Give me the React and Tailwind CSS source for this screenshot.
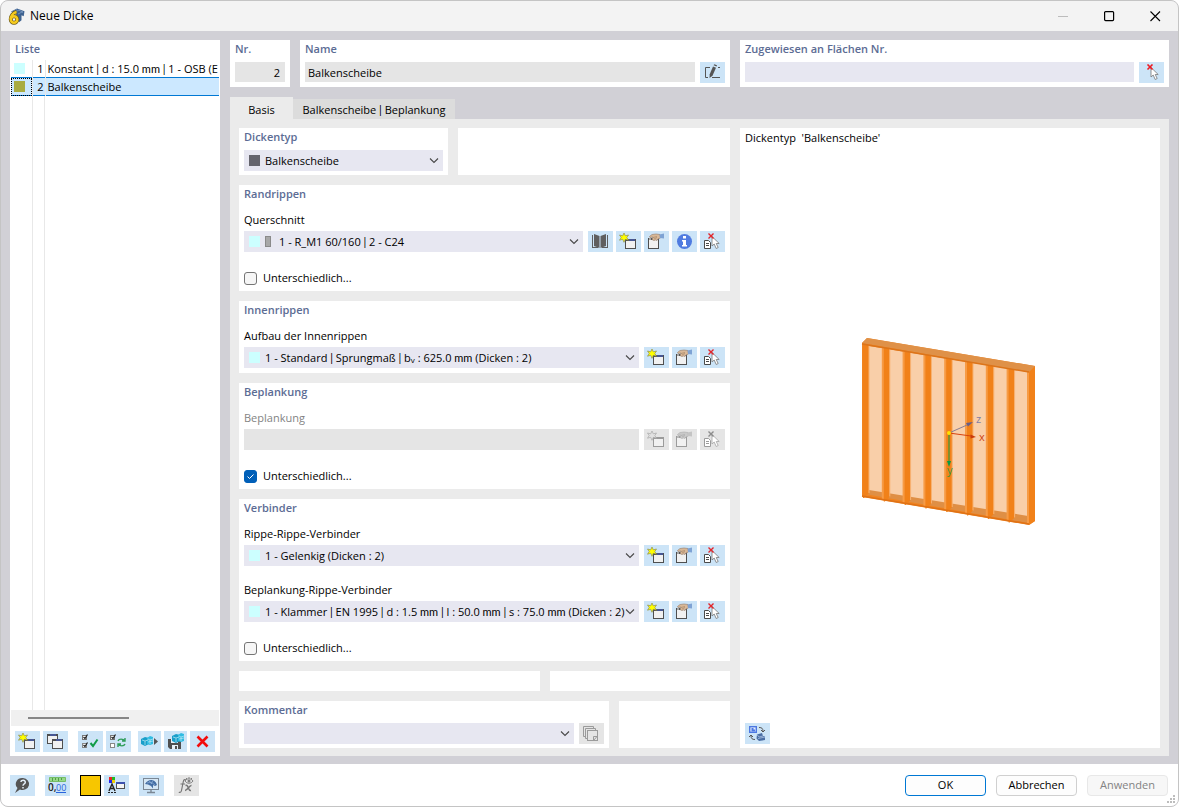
import React from 'react';

// shared look of the blue tool buttons
const toolButton = 'flex h-[21px] w-[25px] shrink-0 items-center justify-center bg-[#cce4f7] hover:bg-[#b8d9f3] disabled:bg-[#e5e5e5]';

const Svg = ({ children, w = 19, h = 17 }) => (
  <svg width={w} height={h} viewBox={`0 0 ${w} ${h}`} fill="none" aria-hidden="true">
    {children}
  </svg>
);

const BookIcon = () => (
  <Svg>
    <path d="M1.500 2v12M16.500 2v12M1 14.500h6M11 14.500h6" stroke="#5f5f5f" />
    <path d="M3 1l5.500 2v12L3 13zM15 1L9.500 3v12l5.500-2z" fill="#5f5f5f" />
  </Svg>
);

const StarWindow = ({ off }) => (
  <Svg>
    <rect x="6.500" y="6.500" width="10" height="9" fill="#f1f1f1" stroke={off ? '#9b9b9b' : '#4f4f4f'} />
    <path d="M6 7h11" stroke={off ? '#9b9b9b' : '#4f4f4f'} strokeWidth="2" />
    {!off && <path d="M10 7h6" stroke="#4060d8" />}
    <path
      d="M5 0l1.300 2.800L9.500 2 7.800 4.500 9.500 7.200 6.300 6.300 5 9.300 3.700 6.300.5 7.200 2.200 4.500.5 2l3.200.8z"
      fill={off ? '#e2e2e2' : '#ffff00'}
      stroke={off ? '#a8a8a8' : '#8f8f50'}
      strokeWidth=".7"
    />
  </Svg>
);

const HandWindow = ({ off }) => (
  <Svg>
    <rect x="1.500" y="6.500" width="10" height="9" fill="#f1f1f1" stroke={off ? '#9b9b9b' : '#4f4f4f'} />
    <path d="M1 6h11" stroke={off ? '#9b9b9b' : '#4f4f4f'} strokeWidth="2" />
    <path d="M2 6h2" stroke={off ? '#d8d8d8' : '#ffffff'} />
    {!off && <path d="M9 6.500h2" stroke="#4060d8" />}
    <path
      d="M2.500 3.500L5 1.500 9 1l4 .5.500 3.500-2.500 1-1 1.500-1.500-.5-1.500.5-1.500-.5L5 6l1-2-3 .5z"
      fill={off ? '#c9c9c9' : '#d9b897'}
      stroke={off ? '#ababab' : '#927b68'}
      strokeWidth=".6"
    />
    <path d="M6 4.500l4-1M7 6l3-1.500" stroke={off ? '#a5a5a5' : '#9d7d60'} strokeWidth=".6" />
    <path d="M12.500 1.500L17 .5v5l-4-.5z" fill={off ? '#c4c4c4' : '#7fa3d4'} />
  </Svg>
);

const InfoIcon = () => (
  <Svg w={17}>
    <circle cx="8.500" cy="8.500" r="7.500" fill="#4f7be0" />
    <path d="M7 3h3v2.500H7zM6 7h4v5h1v1.500H6V12h1V8.500H6z" fill="#fff" />
  </Svg>
);

const CursorShape = ({ off }) => (
  <path d="M9 3.500v9.500l2.200-2 2 4.500 2-1-2-4h3z" fill="#fff" stroke={off ? '#a5a5a5' : '#777'} strokeWidth=".8" />
);

const PickFromList = ({ off }) => (
  <Svg>
    <path d="M1.500 7.500h4l2 2v6h-6z" fill="#fff" stroke={off ? '#9b9b9b' : '#4a4a4a'} />
    <path d="M3 10.500h3M3 12.500h3" stroke={off ? '#9b9b9b' : '#4a4a4a'} />
    <CursorShape off={off} />
    <path d="M5.500.5l5 5M10.500.5l-5 5" stroke={off ? '#8c8c8c' : '#e2252b'} strokeWidth="1.400" />
  </Svg>
);

const PickIcon = () => (
  <Svg>
    <CursorShape />
    <path d="M5.500.5l5 5M10.500.5l-5 5" stroke="#ed1c24" strokeWidth="1.600" />
  </Svg>
);

const EditIcon = () => (
  <Svg>
    <path d="M7 3.500H2.500v10H5M9 13.500h8M15 3.500h2" stroke="#555" />
    <path d="M10 2.500l3 1.200-3.500 8L6.500 14l.2-3.800z" fill="#555" />
    <path d="M10.600 1.300l3 1.200.4-1.200-2.700-1z" fill="#555" />
  </Svg>
);

const WindowsIcon = () => (
  <Svg>
    <rect x="1.500" y="1.500" width="10" height="9" fill="#f1f1f1" stroke="#4f4f4f" />
    <path d="M1 2h11" stroke="#4f4f4f" strokeWidth="2" />
    <path d="M4 2h6" stroke="#4060d8" />
    <rect x="6.500" y="6.500" width="10" height="9" fill="#f1f1f1" stroke="#4f4f4f" />
    <path d="M6 7h11" stroke="#4f4f4f" strokeWidth="2" />
    <path d="M10 7h6" stroke="#4060d8" />
  </Svg>
);

const TwoChecks = ({ sync }) => (
  <Svg>
    <rect x="1.500" y="2.500" width="4" height="4" fill="#fff" stroke="#777" />
    <path d="M2.500 4L4 5.500l2.500-4" stroke="#222" strokeWidth="1.200" />
    <rect x="1.500" y="10.500" width="4" height="4" fill="#fff" stroke="#888" />
    {!sync && <path d="M2.500 12L4 13.500l2.500-4" stroke="#222" strokeWidth="1.200" />}
    {sync ? (
      <path d="M9 8c1-2.500 5-2.500 7 0M16 5v3h-3M16 11c-1 2.500-5 2.500-7 0M9 14v-3h3" stroke="#2e9c58" strokeWidth="1.400" />
    ) : (
      <path d="M9.500 10l2.500 3L16.500 6.500" stroke="#119c48" strokeWidth="2" />
    )}
  </Svg>
);

const Cubes = () => (
  <>
    <path d="M1 6l4-2 4 1v6l-4 2-4-2z" fill="#1a9fca" />
    <path d="M7 5l3-2 3 1v7l-3 1-3-1z" fill="#31bce2" />
    <path d="M2 7l3 1v4M8 6l2 1v4M5 8l3-1M10 7l3-1M8 9l5-1" stroke="#bfeaf5" strokeWidth=".7" />
  </>
);

const ExportIcon = () => (
  <Svg>
    <Cubes />
    <path d="M14 5l4 3.500-4 3.500z" fill="#555" />
  </Svg>
);

const SaveCubes = () => (
  <Svg>
    <path d="M2 6h13v10H4l-2-2z" fill="#4f4f4f" />
    <path d="M5 6h7v4H5zM6 12h6v4H6z" fill="#e8f1f8" />
    <path d="M9 13h2v3H9z" fill="#4f4f4f" />
    <g transform="translate(5 -3)">
      <Cubes />
    </g>
  </Svg>
);

const DeleteIcon = () => (
  <Svg>
    <path d="M4.500 3.500l10 10M14.500 3.500l-10 10" stroke="#f20d0d" strokeWidth="2.600" />
  </Svg>
);

const HelpIcon = () => (
  <Svg>
    <path d="M10 1a6.500 6 0 1 1-3 11.500L2 16l2.500-5A6.500 6 0 0 1 10 1z" fill="#555" />
    <path d="M8 5c0-2.300 4.500-2.300 4.300.2 0 1.800-2.300 1.500-2.300 3.500M10 10v1.600" stroke="#e5f0fa" strokeWidth="1.500" />
  </Svg>
);

const UnitsIcon = () => (
  <Svg>
    <path d="M1.500.5h16v4h-16z" fill="#98d988" stroke="#75bd67" />
    <path d="M4.500 1v3M7.500 1v2M10.500 1v3M13.500 1v2" stroke="#4f9d49" />
    <text x="0" y="14" fontFamily="Open Sans, sans-serif" fontSize="10" fontWeight="600" fill="#222">0,</text>
    <text x="8" y="14" fontFamily="Open Sans, sans-serif" fontSize="9" fill="#2864dc">00</text>
    <path d="M8 15.500h10" stroke="#2864dc" />
  </Svg>
);

const DisplayIcon = () => (
  <Svg>
    <path d="M2 0h3v3H2z" fill="#e22" />
    <path d="M5 0h3v3H5z" fill="#2b2" />
    <path d="M2 3h3v3H2z" fill="#22e" />
    <path d="M5 3h3v3H5z" fill="#ec0" />
    <path d="M2 14l3-7 3 7M3 11.500h4" stroke="#222" strokeWidth="1.400" />
    <path d="M1 15.500h9" stroke="#222" strokeDasharray="2 1" />
    <rect x="9.500" y="5.500" width="8" height="6" fill="#f4f4f4" stroke="#4f4f4f" />
    <path d="M9 6h9" stroke="#3d52ae" strokeWidth="2" />
  </Svg>
);

const MonitorIcon = () => (
  <Svg>
    <rect x="1.500" y="1.500" width="15" height="11" fill="#d6e7f5" stroke="#7b8794" />
    <path d="M3 7c2-3 4-4 6-4s5 1 6 5l-2 1-2-1v3.500L9 9 6 7.500z" fill="#456ea4" />
    <path d="M5 6l4-1 4 3M7 4l3 3M11 3.500L9 7" stroke="#9abbe0" strokeWidth=".6" />
    <path d="M9 13v3M5 15.500h8" stroke="#7b8794" strokeWidth="1.400" />
  </Svg>
);

const FunctionIcon = () => (
  <Svg>
    <path d="M9 3C7.500 1.800 6.600 3 6.200 5L4.600 13c-.4 2-1.300 3-2.800 2.200M3.500 7h4.500" stroke="#777" strokeWidth="1.200" />
    <path d="M8.500 8.500c3-1.500 2.500 6 5.500 5M14.500 8.500c-2-.5-4 5-6.500 5" stroke="#777" strokeWidth="1.400" />
    <path d="M8 4c2-3 6-3 8 0-2 3-6 3-8 0zM9 1l1 1M12 0v1M15 1l-1 1" stroke="#808080" />
    <circle cx="12" cy="4" r="1.500" fill="#808080" />
  </Svg>
);

const CopyIcon = () => (
  <Svg>
    <path d="M3 11.500H1.500v-10h10V3M5 13.500H3.500v-10h10V5" stroke="#9b9b9b" />
    <rect x="5.500" y="5.500" width="10" height="10" stroke="#9b9b9b" />
    <path d="M11.500 15v-3.500H15l-3.500 4" stroke="#9b9b9b" />
  </Svg>
);

const SwapViewIcon = () => (
  <Svg>
    <rect x="1.700" y="1.700" width="6.600" height="5.600" fill="#e2edff" stroke="#4c78e2" strokeWidth="1.400" />
    <path d="M3.500 3h2v1.500H7V6.500H3.500z" fill="#4c78e2" />
    <path d="M11 2.500c3 0 4 1 4 4M13 5l2 2 2-2" stroke="#555" />
    <path d="M7 14.500c-3 0-4-1-4-4M1 12l2-2 2 2" stroke="#555" />
    <path d="M9 9.500l5-1.500 1 3 2 .5v3.500l-6 1-2.500-2.500z" fill="#4b6ea4" />
    <path d="M9 9.500l2 2.500 4-1M10 13.500l7-1.500" stroke="#a9c1e3" strokeWidth=".8" />
  </Svg>
);

const AppLogo = () => (
  <Svg w={17} h={17}>
    <path d="M3 3.500L9 .5l7.500 2.700-.8 5-2.200-1v5l-2.500 2-3-8z" fill="#3e6290" />
    <path d="M4 4l5-2.500M7 4l5-2.500M10 6l5-2.500M11 2l4 2.500" stroke="#87a5cb" strokeWidth=".7" />
    <path d="M8.500 4C5 4.800 2.800 8 2.800 11.300" stroke="#6b5a1c" strokeWidth="4" />
    <ellipse cx="6" cy="11.500" rx="3.200" ry="3.200" stroke="#6b5a1c" strokeWidth="4" />
    <path d="M8.500 4C5 4.800 2.800 8 2.800 11.300" stroke="#f6cb1f" strokeWidth="2.600" />
    <ellipse cx="6" cy="11.500" rx="3.200" ry="3.200" stroke="#f6cb1f" strokeWidth="2.600" />
  </Svg>
);

// separators and units of a property string are set tighter than its words
const Piped = ({ text }) =>
  text.split(/( \| | mm)/).map((part, i) =>
    i % 2 ? <span key={i} className="font-['Lato',sans-serif]">{part}</span> : part
  );

const Box = ({ title, className = 'pb-[5px]', children }) => (
  <section className={`bg-white px-[5px] ${className}`}>
    {title && <h2 className="h-[18px] font-semibold leading-[18px] text-[#5c6c94]">{title}</h2>}
    {children}
  </section>
);

const Combo = ({ label, value, display, swatches }) => (
  <div className="relative h-[21px] min-w-0 flex-1 bg-[#e7e7f1] focus-within:ring-1 focus-within:ring-[#0067c0]">
    <select aria-label={label} className="block h-full w-full appearance-none opacity-0">
      <option>{value}</option>
    </select>
    <div aria-hidden="true" className="pointer-events-none absolute inset-0 flex items-center gap-[5px] pl-[5px]">
      {swatches}
      <span className="whitespace-pre pt-px leading-[18px]">{display || <Piped text={value} />}</span>
    </div>
    <svg className="pointer-events-none absolute right-[4px] top-[8px]" width="10" height="6" viewBox="0 0 10 6" fill="none">
      <path d="M1 .5l4 4 4-4" stroke="#484848" strokeWidth="1.100" />
    </svg>
  </div>
);

const Cyan = () => <span className="size-[11px] bg-[#ccffff]" />;

// new / edit / pick buttons that follow most of the fields
const EntryButtons = ({ off }) => (
  <>
    <button type="button" title="Neu" disabled={off} className={toolButton}><StarWindow off={off} /></button>
    <button type="button" title="Bearbeiten" disabled={off} className={toolButton}><HandWindow off={off} /></button>
    <button type="button" title="Auswählen" disabled={off} className={toolButton}><PickFromList off={off} /></button>
  </>
);

const FieldRow = ({ label, value, display, className = 'mt-2' }) => (
  <div className={className}>
    <div className="h-5 leading-[18px]">{label}</div>
    <div className="flex gap-[5px]">
      <Combo label={label} value={value} display={display} swatches={<Cyan />} />
      <div className="flex gap-[3px]">
        <EntryButtons />
      </div>
    </div>
  </div>
);

const Different = ({ checked }) => (
  <label className="mt-[18px] flex h-[16px] items-center gap-[6px]">
    <span className="relative size-[13px]">
      <input
        type="checkbox"
        defaultChecked={checked}
        className="peer block size-[13px] appearance-none rounded-[3px] border border-[#757575] bg-[#f6f6f6] checked:border-[#005fb8] checked:bg-[#005fb8]"
      />
      <svg className="pointer-events-none absolute inset-0 hidden peer-checked:block" width="13" height="13" viewBox="0 0 13 13" fill="none">
        <path d="M3.500 6.500l2 2 4-4" stroke="#fff" />
      </svg>
    </span>
    Unterschiedlich...
  </label>
);

const ribs = [0, 1, 2, 3, 4, 5, 6, 7];

const WallDrawing = () => (
  <svg width="200" height="200" viewBox="850 330 200 200" role="img" aria-label="Balkenscheibe">
    <path d="M862 343l5-5 168 28v155l-6 4-167-28z" fill="#f18420" />
    <path d="M869 346l159 26v146l-159-25z" fill="#f9cfa9" />
    <path d="M865 494l4-4 159 26v7z" fill="#df8f45" />
    {ribs.map((i) => {
      const x = 862 + i * 20.8;
      const y = 344 + i * 3.5;
      return (
        <g key={i}>
          {i > 0 && <path d={`M${x - 1} ${y}v152l3 0V${y}z`} fill="#f79b45" />}
          <path d={`M${x + 1} ${y}l6 1v148l-5 5-1 0z`} fill="#f18119" />
          <path d={`M${x + 7} ${y + 1}v148`} stroke="#f8b273" />
        </g>
      );
    })}
    <path d="M1027 371l2 1v152l-2 0z" fill="#f79b45" />
    <path d="M1029 372l6-6v155l-6 4z" fill="#f18119" />
    <path d="M862 343l5-5 168 28-6 6z" fill="#df9148" />
    <path d="M862 344l167 28" stroke="#dc741a" strokeWidth="1.500" />
    <path d="M862 496l167 28" stroke="#df7216" strokeWidth="1.500" />
    <path d="M949 433l18-8" stroke="#8b7d91" />
    <path d="M973 422l-7 1 2 3.500z" fill="#675e88" />
    <path d="M949 433l22 3" stroke="#d8420d" />
    <path d="M976 437l-5.500-2.500v4z" fill="#c93a0b" />
    <path d="M949 433v30" stroke="#5c9332" strokeWidth="1.500" />
    <path d="M949 467l-2-6h4z" fill="#079c46" />
    <circle cx="949" cy="433" r="2" fill="#ffe000" />
    <g fontFamily="Open Sans, sans-serif" fontSize="11">
      <text x="976" y="423" fill="#817ca3">z</text>
      <text x="979" y="441" fill="#cf4313">x</text>
      <text x="947" y="474" fill="#3c963b">y</text>
    </g>
  </svg>
);

const TitleBar = () => (
  <header className="flex h-[30px] shrink-0 items-center bg-[#f3f3f3] pl-[7px]">
    <AppLogo />
    <h1 className="ml-[5px] flex-1 text-[12px]">Neue Dicke</h1>
    <button type="button" aria-label="Minimieren" className="flex h-full w-[46px] items-center justify-center">
      <svg width="11" height="11"><path d="M0 5.500h10" stroke="#bcbcbc" /></svg>
    </button>
    <button type="button" aria-label="Maximieren" className="flex h-full w-[46px] items-center justify-center">
      <svg width="11" height="11" fill="none"><rect x=".6" y=".6" width="9" height="9" rx="1" stroke="#000" strokeWidth="1.200" /></svg>
    </button>
    <button type="button" aria-label="Schließen" className="flex h-full w-[46px] items-center justify-center">
      <svg width="11" height="11"><path d="M.5.5l9.500 9.500M10 .5L.5 10" stroke="#000" strokeWidth="1.100" /></svg>
    </button>
  </header>
);

const ListPanel = () => (
  <aside className="flex w-[210px] shrink-0 flex-col bg-white">
    <h2 className="h-[20px] px-[5px] font-semibold leading-[18px] text-[#5c6c94]">Liste</h2>
    <div className="flex flex-1 flex-col overflow-hidden px-px">
      <table className="w-full table-fixed border-collapse leading-[17px]">
        <tbody>
          <tr className="h-[17px]">
            <td className="w-[21px] pl-[3px]"><div className="size-[11px] bg-[#ccffff]" /></td>
            <td className="w-[13px] border-x border-[#e8e8e8] pr-px text-right">1</td>
            <td className="whitespace-pre pl-[2px]"><Piped text="Konstant | d : 15.0 mm | 1 - OSB (E" /></td>
          </tr>
          <tr className="h-[18px] border-y border-[#0078d4] bg-[#cce8ff]">
            <td className="pl-[3px] outline-1 -outline-offset-1 outline-dotted outline-black"><div className="size-[11px] bg-[#a9ac41]" /></td>
            <td className="border-x border-[#e8e8e8] pr-px text-right">2</td>
            <td className="whitespace-pre pl-[2px]">Balkenscheibe</td>
          </tr>
        </tbody>
      </table>
      <div className="ml-[21px] w-[13px] flex-1 border-x border-[#e8e8e8]" />
      <div className="flex h-[16px] items-center bg-[#f0f0f0]">
        <div className="ml-[17px] h-[2px] w-[101px] bg-[#868686]" />
      </div>
    </div>
    <div className="flex px-[5px] pb-[4px] pt-[5px]">
      <button type="button" title="Neu" className={toolButton}><StarWindow /></button>
      <button type="button" title="Kopieren" className={`${toolButton} ml-[3px]`}><WindowsIcon /></button>
      <button type="button" title="Alle wählen" className={`${toolButton} ml-[10px]`}><TwoChecks /></button>
      <button type="button" title="Auswahl umkehren" className={`${toolButton} ml-[3px]`}><TwoChecks sync /></button>
      <div className="ml-auto flex gap-[3px]">
        <button type="button" title="Importieren" className="flex h-[21px] w-[23px] items-center justify-center bg-[#cce4f7]"><ExportIcon /></button>
        <button type="button" title="Speichern" className="flex h-[21px] w-[23px] items-center justify-center bg-[#cce4f7]"><SaveCubes /></button>
        <button type="button" title="Löschen" className={toolButton}><DeleteIcon /></button>
      </div>
    </div>
  </aside>
);

const HeaderFields = () => (
  <div className="flex gap-[10px]">
    <Box title="Nr." className="h-[47px] w-[60px]">
      <input aria-label="Nr." readOnly value="2" className="mt-1 block h-[20px] w-full bg-[#e5e5e5] pr-[5px] text-right" />
    </Box>
    <Box title="Name" className="h-[47px] w-0 flex-[430]">
      <div className="mt-1 flex gap-[5px]">
        <input aria-label="Name" readOnly value="Balkenscheibe" className="h-[20px] min-w-0 flex-1 bg-[#e5e5e5] pl-[3px]" />
        <button type="button" title="Name bearbeiten" className={toolButton}><EditIcon /></button>
      </div>
    </Box>
    <Box title="Zugewiesen an Flächen Nr." className="h-[47px] w-0 flex-[429]">
      <div className="mt-1 flex gap-[5px]">
        <input aria-label="Zugewiesen an Flächen Nr." className="h-[20px] min-w-0 flex-1 bg-[#e7e7f1] pl-[3px]" />
        <button type="button" title="Flächen auswählen" className={toolButton}><PickIcon /></button>
      </div>
    </Box>
  </div>
);

const Form = () => (
  <div className="flex min-w-0 flex-col gap-[10px]">
    <div className="flex gap-[10px]">
      <Box title="Dickentyp" className="w-[209px] pb-1">
        <div className="mt-1 flex">
          <Combo label="Dickentyp" value="Balkenscheibe" swatches={<span className="size-[11px] bg-[#65656d]" />} />
        </div>
      </Box>
      <div className="flex-1 bg-white" />
    </div>

    <Box title="Randrippen">
      <div className="mt-2 h-5 leading-[18px]">Querschnitt</div>
      <div className="flex gap-[5px]">
        <Combo
          label="Querschnitt"
          value="1 - R_M1 60/160 | 2 - C24"
          swatches={<><Cyan /><span className="mr-[3px] h-[11px] w-[6px] border border-[#8a8a8a] bg-[#a8a8a8]" /></>}
        />
        <div className="flex gap-[3px]">
          <button type="button" title="Bibliothek" className={toolButton}><BookIcon /></button>
          <button type="button" title="Neu" className={toolButton}><StarWindow /></button>
          <button type="button" title="Bearbeiten" className={toolButton}><HandWindow /></button>
          <button type="button" title="Info" className={toolButton}><InfoIcon /></button>
          <button type="button" title="Auswählen" className={toolButton}><PickFromList /></button>
        </div>
      </div>
      <Different />
    </Box>

    <Box title="Innenrippen">
      <FieldRow
        label="Aufbau der Innenrippen"
        value="1 - Standard | Sprungmaß | bᵥ : 625.0 mm (Dicken : 2)"
        display={
          <>
            <Piped text="1 - Standard | Sprungmaß | b" />
            <sub className="-bottom-px text-[8px]">v</sub>
            <Piped text=" : 625.0 mm (Dicken : 2)" />
          </>
        }
      />
    </Box>

    <Box title="Beplankung">
      <label htmlFor="beplankung" className="mt-2 block h-5 leading-[18px] text-[#838383]">Beplankung</label>
      <div className="flex gap-[5px]">
        <input id="beplankung" disabled className="h-[21px] min-w-0 flex-1 bg-[#e5e5e5]" />
        <div className="flex gap-[3px]">
          <EntryButtons off />
        </div>
      </div>
      <Different checked />
    </Box>

    <Box title="Verbinder">
      <FieldRow label="Rippe-Rippe-Verbinder" value="1 - Gelenkig (Dicken : 2)" />
      <FieldRow
        label="Beplankung-Rippe-Verbinder"
        value="1 - Klammer | EN 1995 | d : 1.5 mm | l : 50.0 mm | s : 75.0 mm (Dicken : 2)"
        className="mt-[15px]"
      />
      <Different />
    </Box>

    <div className="flex h-[20px] gap-[10px]">
      <div className="flex-1 bg-white" />
      <div className="w-[180px] bg-white" />
    </div>

    <div className="flex gap-[10px]">
      <Box title="Kommentar" className="flex-1 pb-1">
        <div className="mt-1 flex gap-[5px]">
          <Combo label="Kommentar" value="" />
          <button type="button" title="Kommentare" disabled className={toolButton}><CopyIcon /></button>
        </div>
      </Box>
      <div className="w-[111px] bg-white" />
    </div>
  </div>
);

const Preview = () => (
  <div className="flex min-w-0 flex-col bg-white px-[5px] pb-1 pt-px">
    <div className="whitespace-pre leading-[18px]">{"Dickentyp  'Balkenscheibe'"}</div>
    <div className="flex flex-1 items-center justify-center pb-[10px]">
      <WallDrawing />
    </div>
    <button type="button" title="Ansicht wechseln" className={toolButton}><SwapViewIcon /></button>
  </div>
);

const Footer = () => (
  <footer className="relative flex h-[42px] shrink-0 items-center bg-white pl-[9px] pr-[10px]">
    <button type="button" title="Hilfe" className={toolButton}><HelpIcon /></button>
    <button type="button" title="Einheiten" className={`${toolButton} ml-[10px]`}><UnitsIcon /></button>
    <button type="button" title="Farbe" className="ml-[10px] size-[21px] border border-black bg-[#f7c600]" />
    <button type="button" title="Anzeige" className={`${toolButton} ml-[3px]`}><DisplayIcon /></button>
    <button type="button" title="Grafik" className={`${toolButton} ml-[10px]`}><MonitorIcon /></button>
    <button type="button" title="Formel" disabled className={`${toolButton} ml-[10px]`}><FunctionIcon /></button>
    <div className="ml-auto flex gap-[10px]">
      <button type="button" className="h-[21px] w-[81px] rounded-[4px] border border-[#0078d4] bg-[#fdfdfd]">OK</button>
      <button type="button" className="h-[21px] w-[81px] rounded-[4px] border border-[#d0d0d0] bg-[#fdfdfd]">Abbrechen</button>
      <button type="button" disabled className="h-[21px] w-[81px] rounded-[4px] border border-[#e8e8e8] bg-[#f7f7f7] text-[#838383]">Anwenden</button>
    </div>
    <svg className="absolute bottom-[2px] right-[2px]" width="9" height="9" fill="#bdbdbd">
      <path d="M6 0h2v2H6zM3 3h2v2H3zM6 3h2v2H6zM0 6h2v2H0zM3 6h2v2H3zM6 6h2v2H6z" />
    </svg>
  </footer>
);

export default function App() {
  return (
    <div className="flex min-h-screen flex-col overflow-hidden rounded-[8px] border border-[#c4c4c4] bg-[#d1d0d6] font-['Open_Sans','Noto_Sans',sans-serif] text-[11px] text-black">
      <TitleBar />
      <main className="flex flex-1 gap-[10px] px-[9px] pb-[8px] pt-[9px]">
        <ListPanel />
        <div className="flex min-w-0 flex-1 flex-col">
          <HeaderFields />
          <div role="tablist" className="mt-[10px] flex h-[22px] items-end">
            <button type="button" role="tab" aria-selected="true" className="h-[22px] w-[63px] bg-[#ebebeb] pt-[4px]">Basis</button>
            <button type="button" role="tab" aria-selected="false" className="h-[20px] w-[162px] whitespace-pre bg-[#dcdcdc] pt-[2px]"><Piped text="Balkenscheibe | Beplankung" /></button>
          </div>
          <div className="grid flex-1 grid-cols-[minmax(0,491fr)_minmax(0,420fr)] gap-[10px] bg-[#ebebeb] px-[9px] pb-[8px] pt-[9px]">
            <Form />
            <Preview />
          </div>
        </div>
      </main>
      <Footer />
    </div>
  );
}
